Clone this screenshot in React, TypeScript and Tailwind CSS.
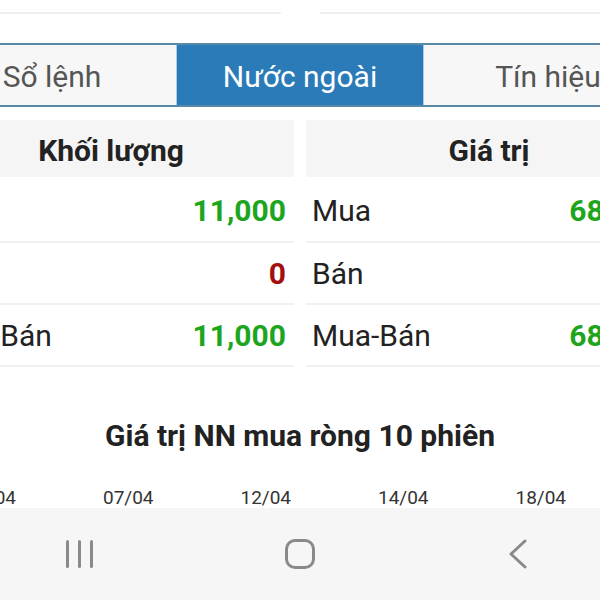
type Row = { label: string; value: string; tone: "up" | "down" };

const volumeRows: Row[] = [
  { label: "Mua", value: "11,000", tone: "up" },
  { label: "Bán", value: "0", tone: "down" },
  { label: "Mua-Bán", value: "11,000", tone: "up" },
];

const valueRows: Row[] = [
  { label: "Mua", value: "686.40", tone: "up" },
  { label: "Bán", value: "0", tone: "down" },
  { label: "Mua-Bán", value: "686.40", tone: "up" },
];

const dates = ["05/04", "07/04", "12/04", "14/04", "18/04"];

function StatTable({ title, rows, padLeft }: { title: string; rows: Row[]; padLeft: string }) {
  return (
    <div className="flex flex-col">
      <div className="flex h-[57px] items-center justify-center bg-[#f5f5f5] pt-[4px] text-[30px] font-bold text-[#222]">
        {title}
      </div>
      {rows.map((r, i) => (
        <div
          key={r.label}
          className={`flex items-center justify-between border-b-2 border-[#f1f1f1] pr-[8px] ${padLeft} ${
            i === 0 ? "h-[66px] pt-[3px]" : "h-[62px]"
          }`}
        >
          <span className="text-[30px] text-[#222]">{r.label}</span>
          <span
            className={`text-[30px] font-bold ${r.tone === "up" ? "text-[#1ea51e]" : "text-[#a30f0f]"}`}
          >
            {r.value}
          </span>
        </div>
      ))}
    </div>
  );
}

export default function App() {
  return (
    <div className="flex h-[600px] w-[600px] flex-col overflow-hidden bg-white font-[family-name:Roboto,sans-serif]">
      <div className="flex-1 overflow-hidden">
        <div className="-ml-[72px] w-[744px]">
          {/* previous section bottom edges */}
          <div className="flex h-[14px] items-end justify-between">
            <div className="ml-[20px] h-[2px] w-[333px] bg-[#efefef]" />
            <div className="mr-[20px] h-[2px] w-[332px] bg-[#efefef]" />
          </div>

          {/* tabs */}
          <div className="mt-[29px] grid h-[64px] grid-cols-3 border-y-2 border-[#5a88a8]">
            <div className="flex items-center justify-center bg-[#f7f7f7] pt-[2px] text-[30px] text-[#555]">Sổ lệnh</div>
            <div className="flex items-center justify-center border-x border-[#a9cbe4] bg-[#2b7bb8] pt-[2px] text-[30px] text-white">
              Nước ngoài
            </div>
            <div className="flex items-center justify-center bg-[#f7f7f7] pt-[2px] text-[30px] text-[#555]">Tín hiệu</div>
          </div>

          {/* foreign stats */}
          <div className="mt-[13px] grid grid-cols-2 gap-x-[12px]">
            <StatTable title="Khối lượng" rows={volumeRows} padLeft="pl-[5px]" />
            <StatTable title="Giá trị" rows={valueRows} padLeft="pl-[6px]" />
          </div>

          {/* chart */}
          <div className="mt-[46px] text-center text-[30px] font-bold text-[#222]">Giá trị NN mua ròng 10 phiên</div>
          <div className="mt-[26px] -ml-[6px] flex">
            {dates.map((d) => (
              <div key={d} className="w-[137.5px] text-center text-[19px] text-[#333]">
                {d}
              </div>
            ))}
          </div>
        </div>
      </div>

      {/* system navigation */}
      <div className="flex h-[92px] shrink-0 items-center bg-[#f6f6f6] pl-[66px]">
        <div className="flex gap-[9px]">
          <div className="h-[28px] w-[3px] rounded-full bg-[#8a8a8a]" />
          <div className="h-[28px] w-[3px] rounded-full bg-[#8a8a8a]" />
          <div className="h-[28px] w-[3px] rounded-full bg-[#8a8a8a]" />
        </div>
        <div className="ml-[192px] h-[30px] w-[30px] rounded-[10px] border-[3px] border-[#8a8a8a]" />
        <svg className="ml-[193px]" width="20" height="30" viewBox="0 0 20 30" fill="none">
          <polyline
            points="17,2 3,15 17,28"
            stroke="#8a8a8a"
            strokeWidth="3"
            strokeLinecap="round"
            strokeLinejoin="round"
          />
        </svg>
      </div>
    </div>
  );
}
